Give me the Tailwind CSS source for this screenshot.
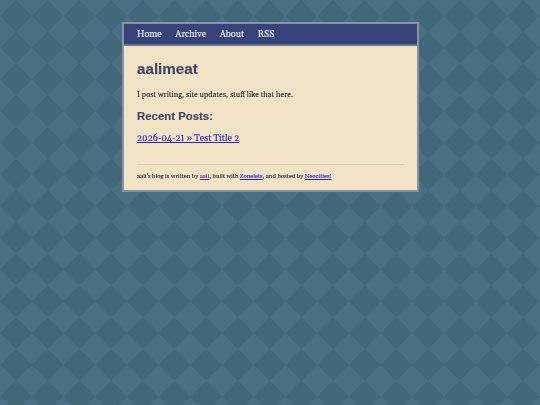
<!DOCTYPE html>
<html lang="en">
<head>
    <meta charset="UTF-8">
    <title>aalimeat</title>
    <script src="https://cdn.jsdelivr.net/npm/@tailwindcss/browser@4"></script>
</head>
<body class="relative h-[405px] overflow-hidden bg-[#4a7085] font-['Georgia','Gelasio','Liberation_Serif',serif] text-[#2b2b33]">
    <!-- tiled diamonds, filled in by the script below -->
    <svg class="absolute inset-0 w-full h-full" aria-hidden="true">
        <path id="diamonds" fill="#41677b" />
    </svg>

    <div class="relative w-[297px] ml-[122px] mt-[22px] border-2 border-[#8a939b] blur-[0.35px] [-webkit-text-stroke:0.12px]">
        <!-- nav -->
        <nav class="flex gap-[13.5px] h-[22px] pl-[13px] pt-[2px] items-center bg-[#36427a] border-b-2 border-[#6f7684] text-[9.12px] text-[#f2ecdf]">
            <a>Home</a>
            <a>Archive</a>
            <a>About</a>
            <a>RSS</a>
        </nav>
        <main class="bg-[#f2e3c6] px-[13px] pt-[14px] pb-[9px]">
            <h1 class="font-['Liberation_Sans',sans-serif] font-bold text-[15.2px] leading-[18px] text-[#3b4668]">aalimeat</h1>
            <p class="mt-[11px] text-[7.6px] leading-[12px]">I post writing, site updates, stuff like that here.</p>
            <h2 class="mt-[8px] font-['Liberation_Sans',sans-serif] font-bold text-[11.4px] leading-[14px] text-[#3b4668]">Recent Posts:</h2>
            <p class="mt-[9px] text-[9.12px] leading-[14px]"><a class="underline text-[#2a20c8]">2026-04-21 » Test Title 2</a></p>
            <footer class="mt-[18px] pt-[6px] border-t border-[#d9ccb2] text-[6.08px] leading-[10px]">
                aali's blog is written by <a class="underline text-[#6b2a8a]">aali</a>, built with <a class="underline text-[#2a20c8]">Zonelets</a>, and hosted by <a class="underline text-[#2a20c8]">Neocities!</a>
            </footer>
        </main>
    </div>

    <script>
        // tile is a bit under 32px, a pattern element wobbles at that size
        const tile = 31.7;
        let d = "";
        for (let row = 0; row < 14; row++) {
            for (let col = 0; col < 18; col++) {
                const cx = 16 + col * tile, cy = 16 + row * tile, r = tile / 2;
                d += `M${cx} ${cy - r}L${cx + r} ${cy}L${cx} ${cy + r}L${cx - r} ${cy}Z`;
            }
        }
        document.getElementById("diamonds").setAttribute("d", d);
    </script>
</body>
</html>
